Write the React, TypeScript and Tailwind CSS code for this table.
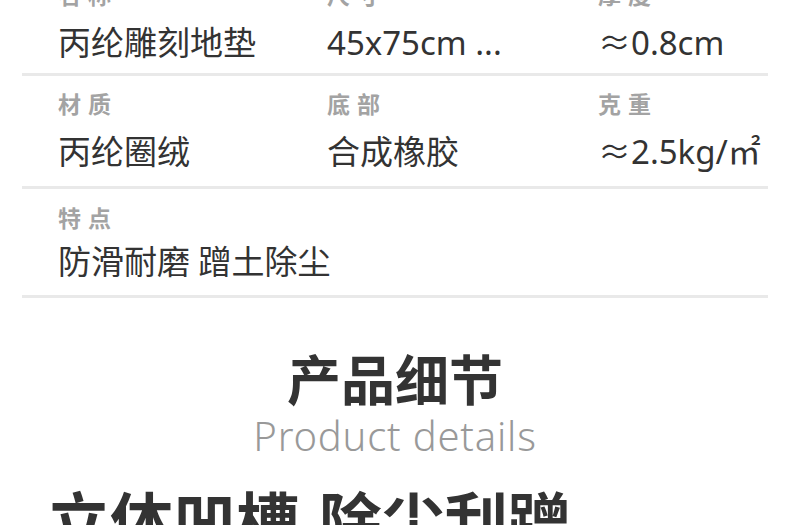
import React from "react";

const font = { fontFamily: '"Noto Sans", "Noto Sans CJK SC", sans-serif' };

const rows = [
  [
    { label: "名称", value: "丙纶雕刻地垫" },
    { label: "尺寸", value: "45x75cm ..." },
    { label: "厚度", value: "≈0.8cm" },
  ],
  [
    { label: "材质", value: "丙纶圈绒" },
    { label: "底部", value: "合成橡胶" },
    { label: "克重", value: "≈2.5kg/㎡" },
  ],
  [{ label: "特点", value: "防滑耐磨 蹭土除尘" }],
];

function SpecRow({
  items,
  className,
  gap,
}: {
  items: { label: string; value: string }[];
  className: string;
  gap: string;
}) {
  return (
    <div className={`border-b-[3px] border-[#e9e9e9] ${className}`}>
      <div className="grid grid-cols-[269px_271px_1fr] pl-[36px]">
        {items.map((it) => (
          <div key={it.label}>
            <div className="text-[23px] leading-[24px] font-bold tracking-[7px] text-[#a3a3a3]">
              {it.label}
            </div>
            <div className={`${gap} text-[33px] leading-[40px] text-[#333] whitespace-nowrap`}>
              {it.value}
            </div>
          </div>
        ))}
      </div>
    </div>
  );
}

export default function App() {
  return (
    <div className="w-[790px] h-[525px] overflow-hidden bg-white" style={font}>
      <div className="mx-[22px] mt-[-33px]">
        <SpecRow items={rows[0]} gap="mt-[16px]" className="pt-[16px] pb-[10px]" />
        <SpecRow items={rows[1]} gap="mt-[16px]" className="pt-[16px] pb-[14px]" />
        <SpecRow items={rows[2]} gap="mt-[12px]" className="pt-[17px] pb-[13px]" />
      </div>

      <div className="mt-[53px] flex flex-col items-center">
        <div className="text-[54px] leading-[58px] font-bold text-[#333]">产品细节</div>
        <div className="mt-[2px] text-[40px] leading-[50px] font-light text-[#999] tracking-[0.02em]">
          Product details
        </div>
      </div>

      <div className="mt-[28px] pl-[47px] flex gap-[20px] text-[63px] leading-none font-bold text-[#333] whitespace-nowrap">
        <span>立体凹槽</span>
        <span>除尘刮蹭</span>
      </div>
    </div>
  );
}
